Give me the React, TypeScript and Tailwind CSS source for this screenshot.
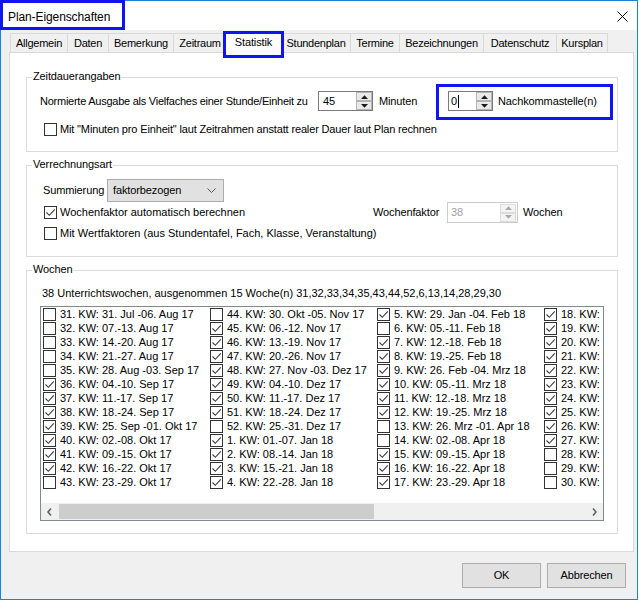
import React from "react";

const F = "font-['Liberation_Sans',Arial,sans-serif]";

type Item = [string, boolean];

const col1: Item[] = [
  ["31. KW: 31. Jul -06. Aug 17", false],
  ["32. KW: 07.-13. Aug 17", false],
  ["33. KW: 14.-20. Aug 17", false],
  ["34. KW: 21.-27. Aug 17", false],
  ["35. KW: 28. Aug -03. Sep 17", false],
  ["36. KW: 04.-10. Sep 17", true],
  ["37. KW: 11.-17. Sep 17", true],
  ["38. KW: 18.-24. Sep 17", true],
  ["39. KW: 25. Sep -01. Okt 17", true],
  ["40. KW: 02.-08. Okt 17", true],
  ["41. KW: 09.-15. Okt 17", true],
  ["42. KW: 16.-22. Okt 17", true],
  ["43. KW: 23.-29. Okt 17", false],
];
const col2: Item[] = [
  ["44. KW: 30. Okt -05. Nov 17", false],
  ["45. KW: 06.-12. Nov 17", true],
  ["46. KW: 13.-19. Nov 17", true],
  ["47. KW: 20.-26. Nov 17", true],
  ["48. KW: 27. Nov -03. Dez 17", true],
  ["49. KW: 04.-10. Dez 17", true],
  ["50. KW: 11.-17. Dez 17", true],
  ["51. KW: 18.-24. Dez 17", true],
  ["52. KW: 25.-31. Dez 17", false],
  ["1. KW: 01.-07. Jan 18", true],
  ["2. KW: 08.-14. Jan 18", true],
  ["3. KW: 15.-21. Jan 18", true],
  ["4. KW: 22.-28. Jan 18", true],
];
const col3: Item[] = [
  ["5. KW: 29. Jan -04. Feb 18", true],
  ["6. KW: 05.-11. Feb 18", false],
  ["7. KW: 12.-18. Feb 18", true],
  ["8. KW: 19.-25. Feb 18", true],
  ["9. KW: 26. Feb -04. Mrz 18", true],
  ["10. KW: 05.-11. Mrz 18", true],
  ["11. KW: 12.-18. Mrz 18", true],
  ["12. KW: 19.-25. Mrz 18", true],
  ["13. KW: 26. Mrz -01. Apr 18", false],
  ["14. KW: 02.-08. Apr 18", false],
  ["15. KW: 09.-15. Apr 18", true],
  ["16. KW: 16.-22. Apr 18", true],
  ["17. KW: 23.-29. Apr 18", true],
];
// the fourth column is scrolled out of view; only the start of each entry is visible
const col4: Item[] = [
  ["18. KW:", true],
  ["19. KW:", true],
  ["20. KW:", true],
  ["21. KW:", true],
  ["22. KW:", true],
  ["23. KW:", true],
  ["24. KW:", true],
  ["25. KW:", true],
  ["26. KW:", true],
  ["27. KW:", true],
  ["28. KW:", false],
  ["29. KW:", false],
  ["30. KW:", false],
];

function Check({ checked }: { checked: boolean }) {
  return (
    <div className="relative w-[13px] h-[13px] shrink-0 border border-[#333333] bg-white">
      {checked && (
        <svg width="11" height="11" viewBox="0 0 11 11" className="absolute left-0 top-0">
          <path d="M1.5 5.5 L4.3 8.3 L9.8 2.3" fill="none" stroke="#3c3c3c" strokeWidth="1.1" />
        </svg>
      )}
    </div>
  );
}

function Spin({ disabled }: { disabled?: boolean }) {
  const c = disabled ? "#a8a8a8" : "#1a1a1a";
  const btn = disabled
    ? "h-[9px] border border-[#dcdcdc] bg-[#f4f4f4] flex items-center justify-center"
    : "h-[9px] border border-[#b4b4b4] bg-[#e9e9e9] flex items-center justify-center";
  return (
    <div className="flex flex-col w-[16px] h-[18px] shrink-0">
      <div className={btn}>
        <svg width="7" height="4" viewBox="0 0 7 4">
          <path d="M0 4 L3.5 0.3 L7 4 Z" fill={c} />
        </svg>
      </div>
      <div className={btn}>
        <svg width="7" height="4" viewBox="0 0 7 4">
          <path d="M0 0 L3.5 3.7 L7 0 Z" fill={c} />
        </svg>
      </div>
    </div>
  );
}

function Group({ title, className, children }: { title: string; className: string; children: React.ReactNode }) {
  return (
    <div className={"relative border border-[#dcdcdc] flex flex-col " + className}>
      <span className="absolute left-[5px] top-[-9px] bg-white px-[1px] leading-[15px]">{title}</span>
      {children}
    </div>
  );
}

const tabs: [string, string][] = [
  ["Allgemein", "w-[57px]"],
  ["Daten", "w-[41px]"],
  ["Bemerkung", "w-[65px]"],
  ["Zeitraum", "w-[53px]"],
  ["Statistik", "sel"],
  ["Stundenplan", "w-[69px]"],
  ["Termine", "w-[49px]"],
  ["Bezeichnungen", "w-[84px]"],
  ["Datenschutz", "w-[73px]"],
  ["Kursplan", "w-[52px] border-r"],
];

function Chevron({ dir }: { dir: "l" | "r" }) {
  return (
    <svg width="5" height="8" viewBox="0 0 5 8">
      <path d={dir === "l" ? "M4 0.5 L1 4 L4 7.5" : "M1 0.5 L4 4 L1 7.5"} fill="none" stroke="#606060" strokeWidth="1.6" />
    </svg>
  );
}

export default function App() {
  return (
    <div className={"relative w-[638px] h-[600px] border border-[#1883d7] bg-[#f0f0f0] flex flex-col text-[11px] text-black tracking-[-0.12px] " + F}>
      {/* title bar */}
      <div className="h-[29px] bg-white flex items-center justify-between pl-[7px] pr-[8px]">
        <span className="text-[12px] tracking-[-0.1px] pt-[2px]">Plan-Eigenschaften</span>
        <svg width="11" height="11" viewBox="0 0 11 11" className="mr-[1px] mt-[2px]">
          <path d="M0.5 0.5 L10.5 10.5 M10.5 0.5 L0.5 10.5" stroke="#000" strokeWidth="1" />
        </svg>
      </div>

      <div className="flex flex-col px-[8px]">
        {/* tabs */}
        <div className="h-[22px] flex items-end pl-[1px]">
          {tabs.map(([t, w]) =>
            w === "sel" ? (
              <div
                key={t}
                className="relative z-10 w-[59px] -mx-[2px] h-[22px] mb-[-1px] bg-white border border-b-0 border-[#d9d9d9] flex items-center justify-center pb-[1px]"
              >
                {t}
              </div>
            ) : (
              <div
                key={t}
                className={"h-[19px] border-l border-t border-[#d9d9d9] bg-[#f0f0f0] flex items-center justify-center tracking-[-0.25px] " + w}
              >
                {t}
              </div>
            )
          )}
        </div>

        {/* panel */}
        <div className="w-[625px] h-[500px] bg-white border border-[#d9d9d9] flex flex-col pl-[16px]">
          <Group title="Zeitdauerangaben" className="mt-[24px] w-[592px] h-[75px]">
            <div className="flex items-center h-[20px] mt-[13px] pl-[13px]">
              <span className="w-[278px] shrink-0 whitespace-nowrap tracking-[-0.25px]">Normierte Ausgabe als Vielfaches einer Stunde/Einheit zu</span>
              <div className="w-[55px] h-[20px] border border-[#7a7a7a] bg-white flex items-center justify-between">
                <span className="pl-[4px]">45</span>
                <Spin />
              </div>
              <span className="ml-[6px] w-[69px] shrink-0">Minuten</span>
              <div className="w-[45px] h-[20px] border border-[#7a7a7a] bg-white flex items-center justify-between">
                <span className="pl-[2px] flex items-center">
                  0<span className="inline-block w-[1px] h-[13px] bg-black ml-[1px]" />
                </span>
                <Spin />
              </div>
              <span className="ml-[5px] whitespace-nowrap">Nachkommastelle(n)</span>
            </div>
            <div className="flex items-center h-[15px] mt-[11px] pl-[17px]">
              <Check checked={false} />
              <span className="ml-[3px] whitespace-nowrap tracking-[-0.15px]">Mit "Minuten pro Einheit" laut Zeitrahmen anstatt realer Dauer laut Plan rechnen</span>
            </div>
          </Group>

          <Group title="Verrechnungsart" className="mt-[13px] w-[592px] h-[92px]">
            <div className="flex items-center h-[23px] mt-[13px] pl-[16px]">
              <span className="w-[64px] shrink-0">Summierung</span>
              <div className="w-[117px] h-[23px] border border-[#adadad] bg-[#e1e1e1] flex items-center justify-between pl-[5px] pr-[7px]">
                <span>faktorbezogen</span>
                <svg width="9" height="5" viewBox="0 0 9 5">
                  <path d="M0.5 0.5 L4.5 4.5 L8.5 0.5" fill="none" stroke="#555" strokeWidth="1" />
                </svg>
              </div>
            </div>
            <div className="flex items-center h-[21px] pl-[17px]">
              <div className="w-[329px] shrink-0 flex items-center">
                <Check checked={true} />
                <span className="ml-[3px] whitespace-nowrap tracking-[0px]">Wochenfaktor automatisch berechnen</span>
              </div>
              <span className="w-[74px] shrink-0">Wochenfaktor</span>
              <div className="w-[71px] h-[21px] border border-[#cccccc] bg-white flex items-center justify-between pr-[1px]">
                <span className="pl-[3px] text-[#a0a0a0]">38</span>
                <Spin disabled />
              </div>
              <span className="ml-[5px]">Wochen</span>
            </div>
            <div className="flex items-center h-[13px] mt-[4px] pl-[17px]">
              <Check checked={false} />
              <span className="ml-[3px] whitespace-nowrap tracking-[0px]">Mit Wertfaktoren (aus Stundentafel, Fach, Klasse, Veranstaltung)</span>
            </div>
          </Group>

          <Group title="Wochen" className="mt-[13px] w-[592px] h-[264px]">
            <div className="h-[15px] mt-[15px] pl-[15px] leading-[15px] whitespace-nowrap tracking-[0px]">
              38 Unterrichtswochen, ausgenommen 15 Woche(n) 31,32,33,34,35,43,44,52,6,13,14,28,29,30
            </div>
            <div className="ml-[13px] mt-[5px] w-[564px] h-[215px] border border-[#828790] bg-white flex flex-col tracking-normal">
              <div className="flex-1 overflow-hidden">
                <div className="flex pl-[2px]">
                  {[col1, col2, col3, col4].map((col, ci) => (
                    <div key={ci} className={ci === 3 ? "w-[58px] shrink-0 flex flex-col" : "w-[167px] shrink-0 flex flex-col"}>
                      {col.map(([t, c]) => (
                        <div key={t} className="h-[14px] flex items-start">
                          <div className="mt-[1px]">
                            <Check checked={c} />
                          </div>
                          <span className="ml-[4px] leading-[15px] whitespace-nowrap">{t}</span>
                        </div>
                      ))}
                    </div>
                  ))}
                </div>
              </div>
              <div className="h-[17px] bg-[#f0f0f0] flex items-center">
                <div className="w-[17px] h-[17px] flex items-center justify-center">
                  <Chevron dir="l" />
                </div>
                <div className="flex-1 h-[17px] flex items-center">
                  <div className="ml-[1px] w-[315px] h-[15px] bg-[#cdcdcd]" />
                </div>
                <div className="w-[17px] h-[17px] flex items-center justify-center">
                  <Chevron dir="r" />
                </div>
              </div>
            </div>
          </Group>
        </div>

        {/* buttons */}
        <div className="flex justify-end gap-[6px] mt-[11px] mr-[3px]">
          <div className="w-[79px] h-[25px] border border-[#adadad] bg-[#e1e1e1] flex items-center justify-center">OK</div>
          <div className="w-[79px] h-[25px] border border-[#adadad] bg-[#e1e1e1] flex items-center justify-center">Abbrechen</div>
        </div>
      </div>

      {/* annotation overlays */}
      <div className="absolute left-[-1px] top-[-1px] w-[125px] h-[30px] border-[3px] border-[#0f14f0] pointer-events-none" />
      <div className="absolute left-[222px] top-[30px] w-[61px] h-[27px] border-[3px] border-[#0f14f0] pointer-events-none z-20" />
      <div className="absolute left-[435px] top-[83px] w-[177px] h-[36px] border-[3px] border-[#0f14f0] pointer-events-none" />
    </div>
  );
}
